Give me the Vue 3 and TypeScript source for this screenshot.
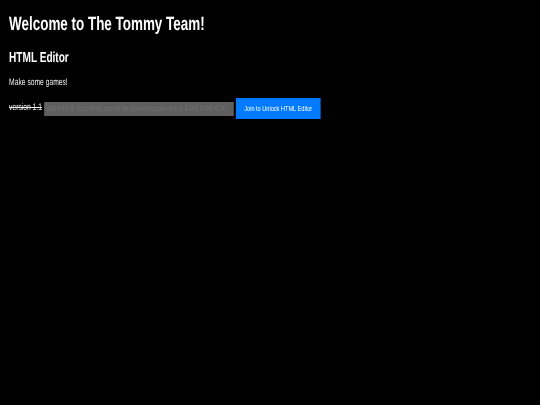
<script setup lang="ts">
const title = 'Welcome to The Tommy Team!'
const warning = 'WARNING! Your Work cannot be saved because this is EXPERIMENTAL'
</script>

<template>
  <main class="page">
    <h1 class="title">{{ title }}</h1>
    <h2 class="subtitle">HTML Editor</h2>
    <p class="lead">Make some games!</p>
    <div class="row">
      <s class="version">version 1.1</s>
      <div class="warning">{{ warning }}</div>
      <button class="join" type="button">Join to Unlock HTML Editor</button>
    </div>
  </main>
</template>

<style>
html, body { margin: 0; background: #000; overflow: hidden; }
</style>

<style scoped>
.page {
  box-sizing: border-box;
  width: 771px;
  height: 405px;
  padding: 15px 13px 0;
  background: #000;
  color: #fff;
  font-family: "Liberation Sans", Arial, sans-serif;
  text-rendering: geometricPrecision;
  overflow: hidden;
  transform: scaleX(0.7);
  transform-origin: left top;
  filter: blur(0.4px);
}
.title {
  margin: 0;
  font-size: 19.2px;
  line-height: 20px;
  font-weight: 700;
}
.subtitle {
  margin: 14px 0 0;
  font-size: 14.4px;
  line-height: 18px;
  font-weight: 700;
}
.lead {
  margin: 10px 0 0;
  font-size: 9.6px;
  line-height: 12px;
  color: #eee;
}
.row {
  display: flex;
  align-items: center;
  margin-top: 9px;
  gap: 3px;
}
.version {
  font-size: 9.6px;
  line-height: 12px;
  color: #eee;
  margin-bottom: 2px;
}
.warning {
  box-sizing: border-box;
  width: 271px;
  height: 14px;
  background: #5e5e5e;
  color: #737373;
  font-size: 8px;
  line-height: 14px;
  padding: 0 3px;
  white-space: nowrap;
  overflow: hidden;
}
.join {
  box-sizing: border-box;
  width: 121px;
  height: 21px;
  margin: 0;
  padding: 0;
  border: 0;
  background: #007bff;
  color: #fff;
  font: 8px "Liberation Sans", Arial, sans-serif;
}
</style>
